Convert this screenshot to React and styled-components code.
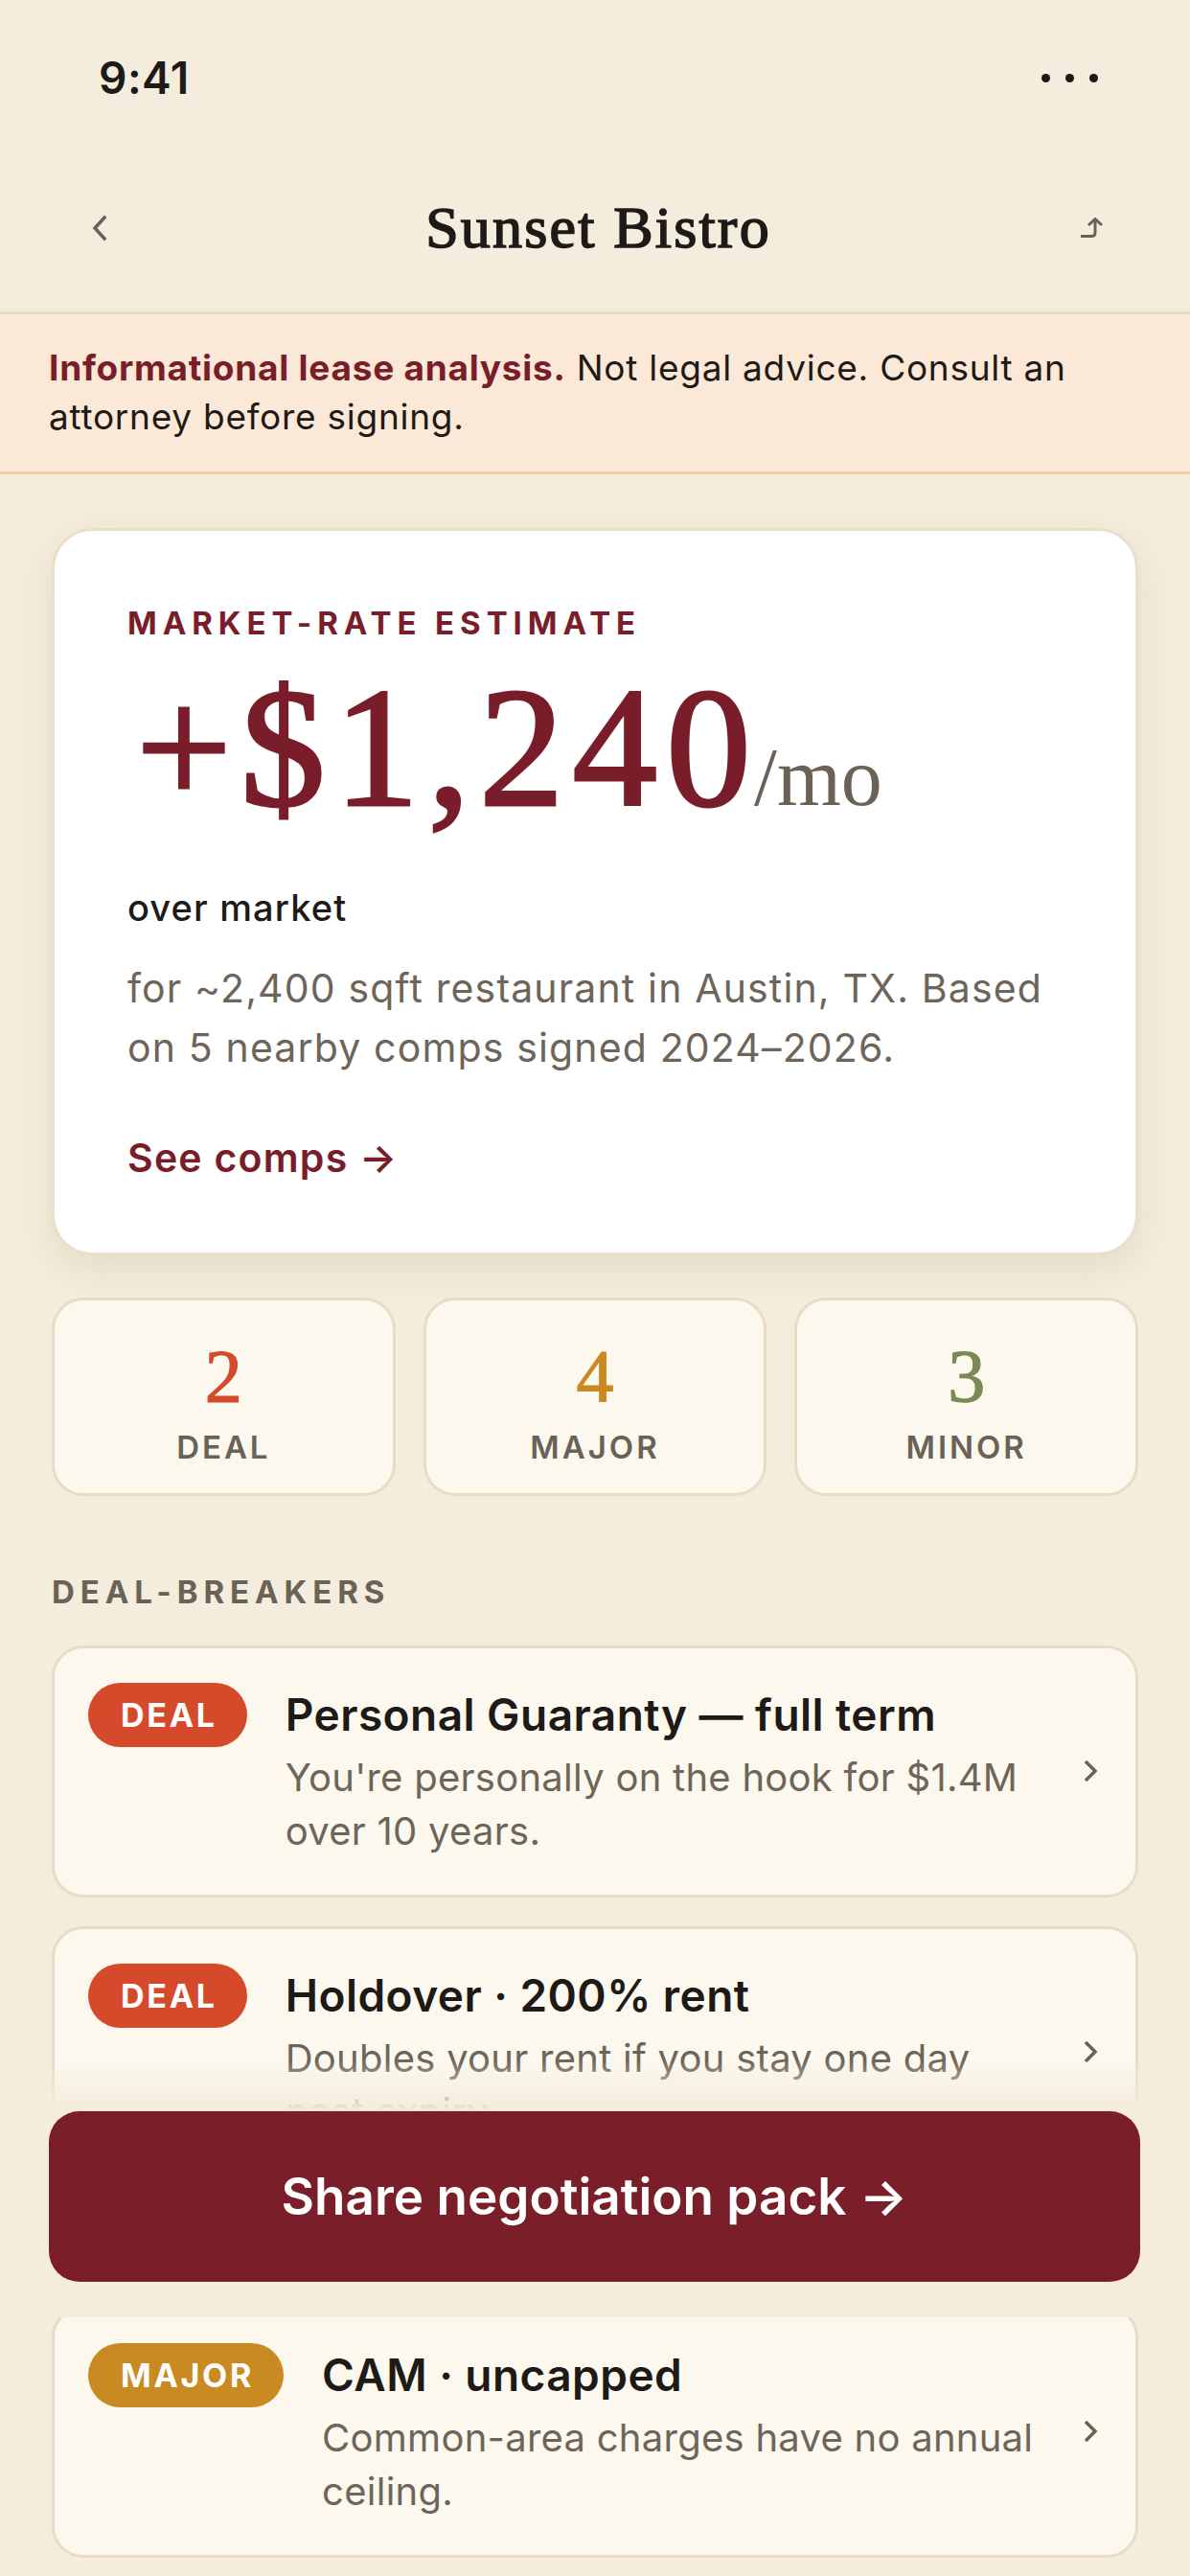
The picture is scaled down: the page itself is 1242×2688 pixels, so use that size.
import styled, { createGlobalStyle } from 'styled-components'

const GlobalStyle = createGlobalStyle`
  html, body {
    margin: 0;
    padding: 0;
    background: #f4ecdc;
  }
  * {
    box-sizing: border-box;
  }
`

const sans = `Inter, "Liberation Sans", sans-serif`
const serif = `"Liberation Serif", "DejaVu Serif", serif`

const tones = {
  deal: '#d64a2c',
  major: '#c98a22',
  minor: '#7b8a55',
}

const Screen = styled.div`
  position: relative;
  width: 1242px;
  height: 2688px;
  overflow: hidden;
  background: #f4ecdc;
  font-family: ${sans};
  color: #1d1a17;
`

const StatusBar = styled.div`
  height: 150px;
  padding: 12px 96px 0 103px;
  display: flex;
  align-items: center;
  justify-content: space-between;
`

const Time = styled.span`
  font-size: 46px;
  font-weight: 600;
  letter-spacing: 0.01em;
`

const Dots = styled.div`
  display: flex;
  gap: 16px;
  span {
    width: 9px;
    height: 9px;
    border-radius: 50%;
    background: #1d1a17;
  }
`

const NavBar = styled.div`
  height: 178px;
  display: grid;
  grid-template-columns: 1fr auto 1fr;
  align-items: center;
  padding: 0 88px 0 95px;
  border-bottom: 3px solid #e8dcc6;
`

const NavIcon = styled.div`
  display: flex;
  justify-content: ${p => (p.$end ? 'flex-end' : 'flex-start')};
  color: #6b6257;
`

const Title = styled.h1`
  margin: 0;
  font-family: ${serif};
  font-size: 62px;
  font-weight: 400;
  line-height: 1.15;
  letter-spacing: 0.035em;
  color: #1d1a17;
  -webkit-text-stroke: 1.6px #1d1a17;
`

const Disclaimer = styled.p`
  margin: 0;
  padding: 30px 51px 32px;
  background: #fbe8d6;
  border-bottom: 3px solid #f0cfa6;
  font-size: 37px;
  line-height: 51px;
  letter-spacing: 0.02em;
  color: #1d1a17;
  strong {
    color: #7a1d2a;
    font-weight: 700;
  }
`

const Content = styled.main`
  padding: 56px 54px 0;
`

const EstimateCard = styled.section`
  background: #ffffff;
  border: 3px solid #eadfca;
  border-radius: 42px;
  padding: 76px 76px 73px;
  box-shadow: 0 14px 36px rgba(110, 80, 40, 0.1);
`

const Eyebrow = styled.div`
  font-size: 33px;
  line-height: 40px;
  font-weight: 700;
  letter-spacing: 0.18em;
  color: ${p => p.$color || '#6b6257'};
  margin-top: ${p => p.$top || 0}px;
`

const Amount = styled.div`
  margin-top: 22px;
  padding-left: 9px;
  font-family: ${serif};
  font-size: 177px;
  line-height: 1;
  color: #7a1d2a;
  letter-spacing: 0.052em;
  -webkit-text-stroke: 3px #7a1d2a;
  white-space: nowrap;
`

const Per = styled.span`
  font-size: 86px;
  letter-spacing: 0;
  margin-left: -6px;
  color: #6b6257;
  -webkit-text-stroke: 0;
`

const OverMarket = styled.div`
  margin-top: 55px;
  font-size: 38px;
  line-height: 47px;
  font-weight: 500;
  letter-spacing: 0.03em;
`

const Basis = styled.p`
  margin: 29px 0 0;
  font-size: 41px;
  line-height: 62px;
  letter-spacing: 0.028em;
  color: #6e655a;
`

const Link = styled.a`
  display: block;
  margin-top: 59px;
  font-size: 41px;
  line-height: 51px;
  font-weight: 600;
  letter-spacing: 0.03em;
  color: #7a1d2a;
  text-decoration: none;
`

const StatGrid = styled.div`
  margin-top: 44px;
  display: grid;
  grid-template-columns: repeat(3, 1fr);
  gap: 29px;
`

const Stat = styled.div`
  background: #fcf8ee;
  border: 3px solid #e9dcc4;
  border-radius: 33px;
  padding: 40px 0 28px;
  display: flex;
  flex-direction: column;
  align-items: center;
`

const StatValue = styled.div`
  font-family: ${serif};
  font-size: 78px;
  line-height: 1;
  color: ${p => tones[p.$tone]};
  -webkit-text-stroke: 1.2px ${p => tones[p.$tone]};
`

const StatLabel = styled.div`
  margin-top: 15px;
  font-size: 33px;
  line-height: 40px;
  font-weight: 600;
  letter-spacing: 0.09em;
  color: #6b6257;
`

const IssueList = styled.div`
  margin-top: 36px;
  display: flex;
  flex-direction: column;
  gap: 30px;
`

const IssueCard = styled.article`
  display: flex;
  align-items: flex-start;
  gap: 40px;
  background: #fcf8ee;
  border: 3px solid #e9dcc4;
  border-radius: 33px;
  padding: 36px 39px 38px 35px;
`

const Badge = styled.span`
  flex: none;
  height: 67px;
  padding: 0 31px 0 34px;
  border-radius: 34px;
  background: ${p => tones[p.$tone]};
  color: #ffffff;
  font-size: 34px;
  line-height: 67px;
  font-weight: 700;
  letter-spacing: 0.08em;
`

const IssueText = styled.div`
  flex: 1;
  min-width: 0;
  padding-right: 2px;
`

const IssueTitle = styled.h3`
  margin: 0;
  font-size: 46px;
  line-height: 67px;
  font-weight: 600;
  letter-spacing: 0.01em;
  color: #1d1a17;
`

const IssueDesc = styled.p`
  margin: 4px 0 0;
  font-size: 40px;
  line-height: 56px;
  letter-spacing: 0.0065em;
  color: #6e655a;
`

const Chevron = styled.div`
  flex: none;
  align-self: center;
  display: flex;
  color: #6b6257;
`

const CtaDock = styled.div`
  position: absolute;
  left: 0;
  right: 0;
  bottom: 270px;
  height: 268px;
  padding: 53px 52px 37px 51px;
  background: linear-gradient(
    to bottom,
    rgba(244, 236, 220, 0) 0,
    rgba(244, 236, 220, 1) 53px,
    #f4ecdc 100%
  );
`

const CtaButton = styled.button`
  width: 100%;
  height: 178px;
  border: none;
  border-radius: 32px;
  background: #7a1e2a;
  color: #ffffff;
  font-family: ${sans};
  font-size: 53px;
  font-weight: 600;
  cursor: pointer;
`

const BackIcon = () => (
  <svg width="18" height="28" viewBox="0 0 18 28" fill="none">
    <path d="M14 3 L4 14 L14 25" stroke="currentColor" strokeWidth="3.5" strokeLinecap="square" />
  </svg>
)

const ShareIcon = () => (
  <svg width="26" height="22" viewBox="0 0 26 22" fill="none">
    <path d="M0 19.5 H11 Q15 19.5 15 15.5 V2" stroke="currentColor" strokeWidth="3" />
    <path d="M8 8 L15 1.5 L22 8" stroke="currentColor" strokeWidth="3" />
  </svg>
)

const ChevronIcon = () => (
  <svg width="16" height="24" viewBox="0 0 16 24" fill="none">
    <path d="M3 2 L13 12 L3 22" stroke="currentColor" strokeWidth="3.5" />
  </svg>
)

const stats = [
  { value: 2, label: 'DEAL', tone: 'deal' },
  { value: 4, label: 'MAJOR', tone: 'major' },
  { value: 3, label: 'MINOR', tone: 'minor' },
]

const dealBreakers = [
  {
    tone: 'deal',
    tag: 'DEAL',
    title: 'Personal Guaranty — full term',
    desc: "You're personally on the hook for $1.4M over 10 years.",
  },
  {
    tone: 'deal',
    tag: 'DEAL',
    title: 'Holdover · 200% rent',
    desc: 'Doubles your rent if you stay one day past expiry.',
  },
]

const majors = [
  {
    tone: 'major',
    tag: 'MAJOR',
    title: 'CAM · uncapped',
    desc: 'Common-area charges have no annual ceiling.',
  },
]

const Issue = ({ item }) => (
  <IssueCard>
    <Badge $tone={item.tone}>{item.tag}</Badge>
    <IssueText>
      <IssueTitle>{item.title}</IssueTitle>
      <IssueDesc>{item.desc}</IssueDesc>
    </IssueText>
    <Chevron>
      <ChevronIcon />
    </Chevron>
  </IssueCard>
)

export default function App() {
  return (
    <Screen>
      <GlobalStyle />
      <StatusBar>
        <Time>9:41</Time>
        <Dots>
          <span />
          <span />
          <span />
        </Dots>
      </StatusBar>

      <NavBar>
        <NavIcon>
          <BackIcon />
        </NavIcon>
        <Title>Sunset Bistro</Title>
        <NavIcon $end>
          <ShareIcon />
        </NavIcon>
      </NavBar>

      <Disclaimer>
        <strong>Informational lease analysis.</strong> Not legal advice. Consult an attorney before signing.
      </Disclaimer>

      <Content>
        <EstimateCard>
          <Eyebrow $color="#7a1d2a">MARKET-RATE ESTIMATE</Eyebrow>
          <Amount>
            +$1,240<Per>/mo</Per>
          </Amount>
          <OverMarket>over market</OverMarket>
          <Basis>
            for ~2,400 sqft restaurant in Austin, TX. Based on 5 nearby comps signed 2024–2026.
          </Basis>
          <Link href="#">See comps →</Link>
        </EstimateCard>

        <StatGrid>
          {stats.map(s => (
            <Stat key={s.label}>
              <StatValue $tone={s.tone}>{s.value}</StatValue>
              <StatLabel>{s.label}</StatLabel>
            </Stat>
          ))}
        </StatGrid>

        <Eyebrow $top={80}>DEAL-BREAKERS</Eyebrow>
        <IssueList>
          {dealBreakers.map(item => (
            <Issue key={item.title} item={item} />
          ))}
        </IssueList>

        <Eyebrow $top={57}>MAJOR ISSUES</Eyebrow>
        <IssueList>
          {majors.map(item => (
            <Issue key={item.title} item={item} />
          ))}
        </IssueList>
      </Content>

      <CtaDock>
        <CtaButton>Share negotiation pack →</CtaButton>
      </CtaDock>
    </Screen>
  )
}
